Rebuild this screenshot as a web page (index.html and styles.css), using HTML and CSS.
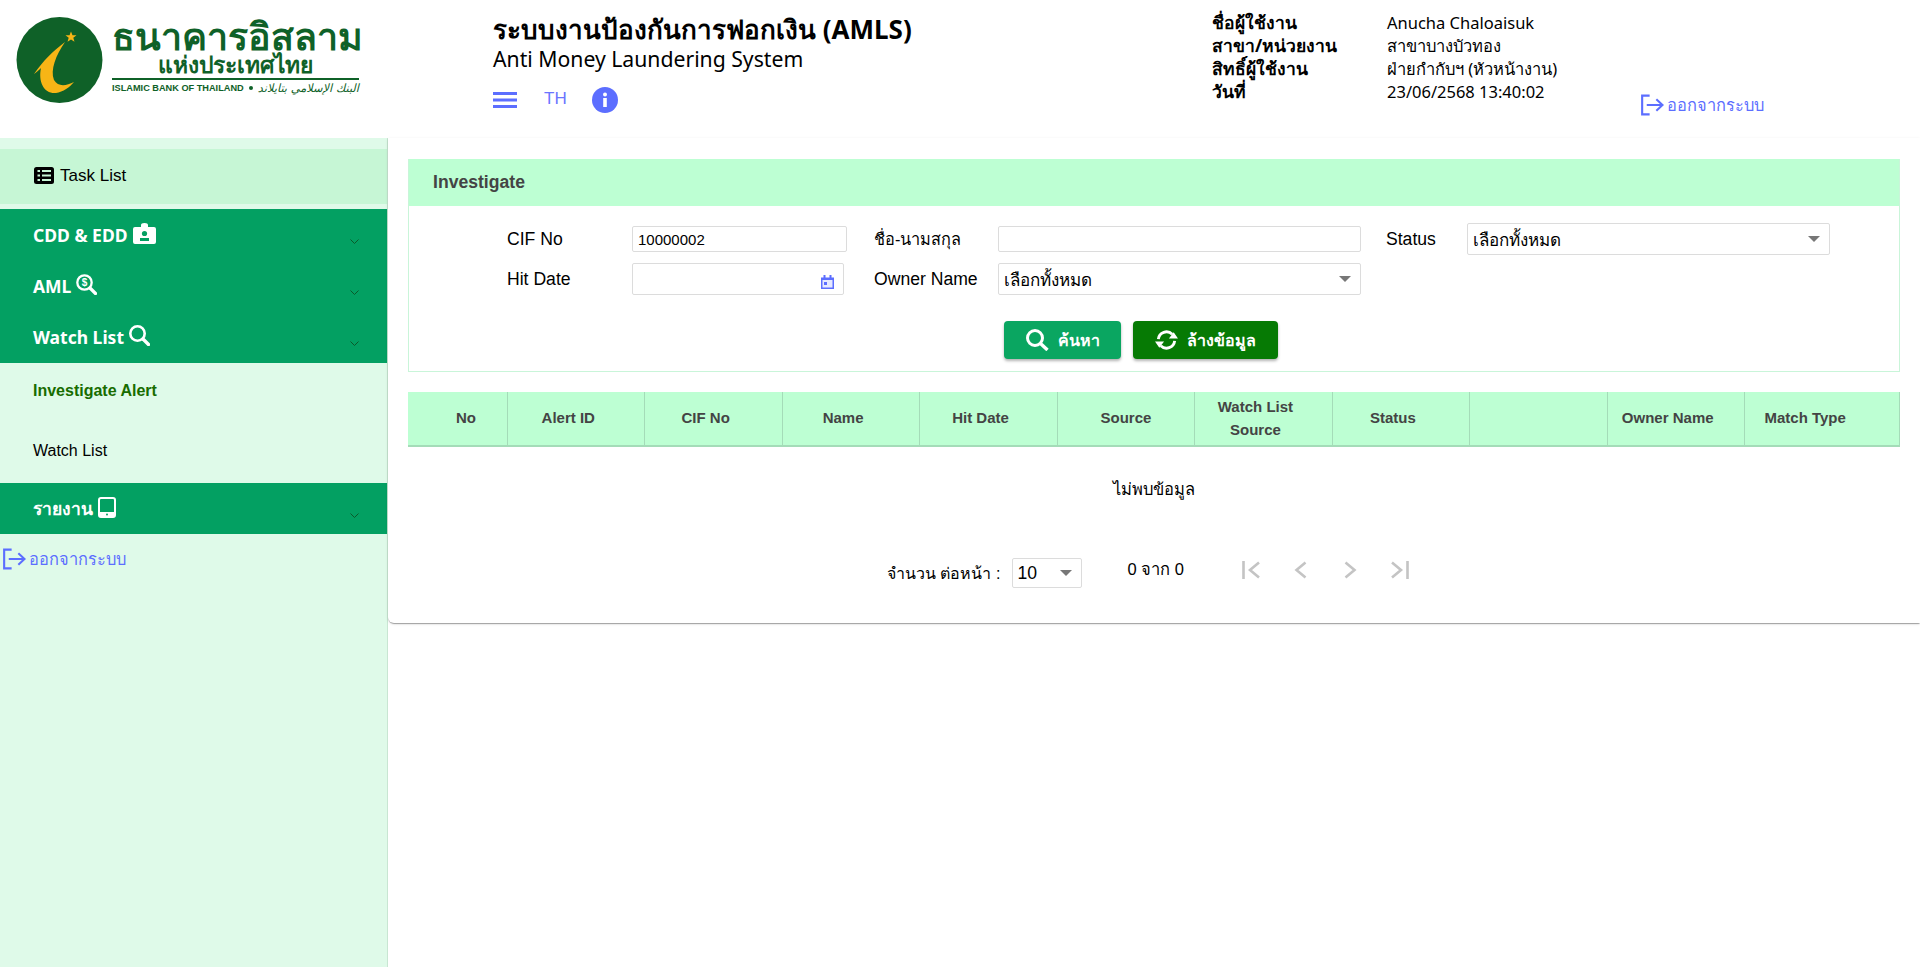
FILE: index.html
```html
<!DOCTYPE html>
<html lang="th">
<head>
<meta charset="utf-8">
<title>AMLS</title>
<link rel="stylesheet" href="styles.css">
</head>
<body>
<header class="header">
  <div class="brand">
    <svg class="brand-mark" viewBox="16 17 87 87"><circle cx="59.5" cy="60" r="43" fill="#0f6128"/><path d="M65 42C52 52 44 60 34 74C38 71 40 69 41 68C38 82 44 94 56 93C63 92 70 87 74 82C66 86 58 87 54 80C50 70 56 55 65 42Z" fill="#f7b516"/><polygon points="71,31.5 72.5,35.3 76.5,35.3 73.3,37.8 74.5,41.8 71,39.5 67.5,41.8 68.7,37.8 65.5,35.3 69.5,35.3" fill="#f7b516"/></svg>
    <div class="brand-text">
      <div class="brand-th">ธนาคารอิสลาม</div>
      <div class="brand-sub">แห่งประเทศไทย</div>
      <div class="brand-foot"><span class="brand-en">ISLAMIC BANK OF THAILAND</span><span class="brand-dot"></span><span class="brand-ar" dir="rtl">البنك الإسلامي بتايلاند</span></div>
    </div>
  </div>
  <div class="titles">
    <div class="title">ระบบงานป้องกันการฟอกเงิน (AMLS)</div>
    <div class="subtitle">Anti Money Laundering System</div>
    <div class="tools">
      <svg class="tool-menu" viewBox="0 0 24 16"><path d="M0 1.5H24M0 8H24M0 14.5H24" stroke="#5c6eff" stroke-width="3"/></svg>
      <span class="tool-lang">TH</span>
      <svg class="tool-info" viewBox="0 0 26 26"><circle cx="13" cy="13" r="13" fill="#5c6eff"/><rect x="11.2" y="11" width="3.6" height="9" fill="#fff"/><circle cx="13" cy="7.6" r="2" fill="#fff"/></svg>
    </div>
  </div>
  <dl class="user">
    <dt>ชื่อผู้ใช้งาน</dt><dd>Anucha Chaloaisuk</dd>
    <dt>สาขา/หน่วยงาน</dt><dd>สาขาบางบัวทอง</dd>
    <dt>สิทธิ์ผู้ใช้งาน</dt><dd>ฝ่ายกำกับฯ (หัวหน้างาน)</dd>
    <dt>วันที่</dt><dd>23/06/2568 13:40:02</dd>
  </dl>
  <a class="logout logout-top"><svg class="logout-icon" viewBox="0 0 24 22"><path d="M9 1.2H1.2V20.8H9M6 11H22M16 5L22.5 11L16 17" fill="none" stroke="#5c6eff" stroke-width="2.2"/></svg><span>ออกจากระบบ</span></a>
</header>
<div class="app">
  <nav class="sidebar">
    <div class="task"><svg class="task-icon" viewBox="0 0 20 17"><rect width="20" height="17" rx="2.5" fill="#000"/><path d="M3.5 4H6M8 4H17M3.5 8.5H6M8 8.5H17M3.5 13H6M8 13H17" stroke="#c6f6d5" stroke-width="2.2"/></svg><span>Task List</span></div>
    <div class="group">
      <div class="group-row"><span class="group-name">CDD &amp; EDD<svg class="g-icon icon-badge" viewBox="0 0 23 21"><path d="M2 4H8V2Q8 0 11.5 0Q15 0 15 2V4H21Q23 4 23 6V19Q23 21 21 21H2Q0 21 0 19V6Q0 4 2 4Z" fill="#fff"/><circle cx="11.5" cy="10.5" r="2.6" fill="#03a062"/><rect x="7" y="15" width="9" height="3" fill="#03a062"/></svg></span><svg class="chev" viewBox="0 0 9 5"><path d="M.5.5L4.5 4.5L8.500.5" fill="none" stroke="#0b5a2a"/></svg></div>
      <div class="group-row"><span class="group-name">AML<svg class="g-icon icon-search" viewBox="0 0 21 21"><circle cx="8.500" cy="8.500" r="7.200" fill="none" stroke="#fff" stroke-width="2.300"/><path d="M14 14L19.500 19.500" stroke="#fff" stroke-width="3.200" stroke-linecap="round"/><text x="8.500" y="12" class="dollar">$</text></svg></span><svg class="chev" viewBox="0 0 9 5"><path d="M.5.5L4.5 4.5L8.500.5" fill="none" stroke="#0b5a2a"/></svg></div>
      <div class="group-row"><span class="group-name">Watch List<svg class="g-icon icon-search" viewBox="0 0 21 21"><circle cx="8.500" cy="8.500" r="7.200" fill="none" stroke="#fff" stroke-width="2.600"/><path d="M14 14L19.500 19.500" stroke="#fff" stroke-width="3.400" stroke-linecap="round"/></svg></span><svg class="chev" viewBox="0 0 9 5"><path d="M.5.5L4.5 4.5L8.500.5" fill="none" stroke="#0b5a2a"/></svg></div>
    </div>
    <a class="sub sub-active">Investigate Alert</a>
    <a class="sub">Watch List</a>
    <div class="group">
      <div class="group-row"><span class="group-name">รายงาน<svg class="g-icon icon-tablet" viewBox="0 0 18 21"><rect x="1" y="1" width="16" height="19" rx="2" fill="none" stroke="#fff" stroke-width="2"/><rect x="1" y="15" width="16" height="5" fill="#fff"/><circle cx="9" cy="17.500" r="1" fill="#03a062"/></svg></span><svg class="chev" viewBox="0 0 9 5"><path d="M.5.5L4.5 4.5L8.500.5" fill="none" stroke="#0b5a2a"/></svg></div>
    </div>
    <a class="logout logout-side"><svg class="logout-icon" viewBox="0 0 24 22"><path d="M9 1.200H1.200V20.800H9M6 11H22M16 5L22.500 11L16 17" fill="none" stroke="#5c6eff" stroke-width="2.200"/></svg><span>ออกจากระบบ</span></a>
  </nav>
  <div class="content">
    <main class="sheet">
      <section class="panel">
        <h2 class="panel-head">Investigate</h2>
        <div class="form">
          <label class="f-label">CIF No</label>
          <input class="input" type="text" value="10000002">
          <label class="f-label f-label-th">ชื่อ-นามสกุล</label>
          <input class="input" type="text">
          <label class="f-label">Status</label>
          <div class="select"><span>เลือกทั้งหมด</span><i class="caret"></i></div>
          <label class="f-label">Hit Date</label>
          <div class="date"><svg class="cal" viewBox="0 0 13 14"><path d="M0 2.500H13V14H0ZM2.500 0H4.500V3H2.500ZM8.500 0H10.500V3H8.500Z" fill="#5c6eff"/><rect x="1.500" y="5" width="10" height="7.500" fill="#e6e9ff"/><rect x="3" y="7" width="3" height="3" fill="#5c6eff"/></svg></div>
          <label class="f-label">Owner Name</label>
          <div class="select"><span>เลือกทั้งหมด</span><i class="caret"></i></div>
        </div>
        <div class="actions">
          <button class="btn btn-search" type="button"><svg class="btn-icon" viewBox="0 0 23 22"><circle cx="9" cy="9" r="7.500" fill="none" stroke="#fff" stroke-width="3"/><path d="M14.500 14.500L21.500 21" stroke="#fff" stroke-width="3.400"/></svg><span>ค้นหา</span></button>
          <button class="btn btn-clear" type="button"><svg class="btn-icon" viewBox="0 0 24 22"><path d="M3.500 10A8.500 8.500 0 0 1 18 5M20.500 12A8.500 8.500 0 0 1 6 17" fill="none" stroke="#fff" stroke-width="3"/><path d="M14.500 9.500H24L19.500 3ZM0 12.500H9.500L4.500 19Z" fill="#fff"/></svg><span>ล้างข้อมูล</span></button>
        </div>
      </section>
      <table class="grid">
        <thead>
          <tr><th>No</th><th>Alert ID</th><th>CIF No</th><th>Name</th><th>Hit Date</th><th>Source</th><th>Watch List<br>Source</th><th>Status</th><th></th><th>Owner Name</th><th>Match Type</th></tr>
        </thead>
      </table>
      <p class="empty">ไม่พบข้อมูล</p>
      <div class="pager">
        <span class="pager-label">จำนวน ต่อหน้า :</span>
        <div class="select select-small"><span>10</span><i class="caret"></i></div>
        <span class="pager-range">0 จาก 0</span>
        <div class="pager-nav">
          <svg viewBox="0 0 19 18"><path d="M1.500 0V18M17 1.500L8 9L17 16.500" fill="none" stroke="#c4c4c4" stroke-width="2.600"/></svg>
          <svg viewBox="0 0 19 18"><path d="M13.500 1.500L4.500 9L13.500 16.500" fill="none" stroke="#c4c4c4" stroke-width="2.600"/></svg>
          <svg class="pager-next" viewBox="0 0 19 18"><path d="M5.500 1.500L14.500 9L5.500 16.500" fill="none" stroke="#c4c4c4" stroke-width="2.600"/></svg>
          <svg class="pager-last" viewBox="0 0 19 18"><path d="M17.500 0V18M2 1.500L11 9L2 16.500" fill="none" stroke="#c4c4c4" stroke-width="2.600"/></svg>
        </div>
      </div>
    </main>
  </div>
</div>
</body>
</html>
```
FILE: styles.css
```css
* { box-sizing: border-box; }
html, body { margin: 0; height: 967px; overflow: hidden; background: #fff; }
body { font-family: "Liberation Sans", "Noto Sans", sans-serif; color: #000; }

.header { display: flex; height: 138px; }
.brand { width: 493px; display: flex; padding: 16px 0 0 16px; gap: 9px; }
.brand-mark { width: 87px; height: 87px; flex: none; margin-top: 1px; }
.brand-text { width: 247px; display: flex; flex-direction: column; color: #0f6128; }
.brand-th { font-size: 37.500px; font-weight: 700; line-height: 43px; white-space: nowrap; text-align: center; }
.brand-sub { font-size: 22.800px; font-weight: 700; line-height: 13px; text-align: center; white-space: nowrap; border-bottom: 2px solid #0f6128; height: 21px; }
.brand-foot { display: flex; align-items: center; justify-content: space-between; margin-top: 1px; height: 14px; white-space: nowrap; }
.brand-en { font-size: 9.200px; font-weight: 700; }
.brand-dot { width: 4px; height: 4px; border-radius: 50%; background: #0f6128; }
.brand-ar { font-size: 11.400px; font-family: "DejaVu Sans", sans-serif; font-style: italic; }

.titles { width: 719px; padding-top: 14px; }
.title { font-family: "Noto Sans", "Liberation Sans", sans-serif; font-size: 26px; font-weight: 700; line-height: 30px; white-space: nowrap; }
.subtitle { font-family: "Noto Sans", sans-serif; font-size: 21.200px; line-height: 30px; white-space: nowrap; }
.tools { display: flex; align-items: center; height: 28px; margin-top: 12px; }
.tool-menu { width: 24px; height: 16px; }
.tool-lang { margin-left: 27px; width: 48px; color: #6b75ff; font-size: 17px; margin-top: -2px; }
.tool-info { width: 26px; height: 26px; margin-top: -1px; }

.user { width: 429px; margin: 0; padding-top: 11px; display: grid; grid-template-columns: 175px 1fr; grid-auto-rows: 23px; align-items: center; font-family: "Noto Sans", sans-serif; font-size: 16.500px; white-space: nowrap; }
.user dt { font-weight: 700; font-size: 17.500px; }
.user dd { margin: 0; }

.logout { display: flex; align-items: center; gap: 3px; color: #5c6eff; font-size: 16.400px; line-height: 22px; white-space: nowrap; font-family: "Noto Sans", "Liberation Sans", sans-serif; }
.logout-top { align-self: flex-start; margin-top: 94px; }
.logout-icon { width: 23px; height: 22px; flex: none; }

.app { display: flex; height: 829px; }
.sidebar { width: 388px; flex: none; background: #dffae9; border-right: 1px solid #c8e6d2; padding-top: 11px; }
.task { height: 55px; margin-bottom: 5px; background: #c6f6d5; padding: 0 0 2px 34px; display: flex; align-items: center; gap: 6px; font-size: 17px; }
.task-icon { width: 20px; height: 17px; }
.group { background: #03a062; }
.group-row { height: 51.300px; display: flex; align-items: center; justify-content: space-between; padding: 0 28px 0 33px; }
.group-name { display: flex; align-items: center; gap: 5px; color: #fff; font-family: "Noto Sans", "Liberation Sans", sans-serif; font-weight: 700; font-size: 17.500px; }
.g-icon { flex: none; margin-top: -3px; }
.icon-badge { width: 23px; height: 21px; }
.icon-search { width: 21px; height: 21px; }
.icon-tablet { width: 18px; height: 21px; }
.dollar { font-family: "Liberation Sans", sans-serif; font-size: 10px; font-weight: 700; fill: #fff; text-anchor: middle; }
.chev { width: 9px; height: 5px; margin-top: 13px; }
.sub { display: block; height: 60px; padding: 19px 0 0 33px; line-height: 18px; font-size: 16px; }
.sub-active { color: #186c00; font-weight: 700; }
.logout-side { height: 50px; padding-left: 3px; }

.content { flex: 1; background: #fff; }
.sheet { height: 485px; padding: 21px 20px 0; border-radius: 0 0 0 6px; box-shadow: 0 2px 1px -1px rgba(0,0,0,.2), 0 1px 1px 0 rgba(0,0,0,.14), 0 1px 3px 0 rgba(0,0,0,.12); }
.panel { height: 213px; border: 1px solid #c9f5d9; border-top: 0; }
.panel-head { margin: 0; height: 47px; background: #bdffd3; padding-left: 24px; font-size: 17.600px; line-height: 46px; color: #444; font-weight: 700; }
.form { display: grid; grid-template-columns: 125px 215px 27px 124px 363px 25px 81px 363px; grid-template-rows: 32px 32px; row-gap: 8px; align-items: center; padding: 17px 0 0 98px; }
.form .f-label:nth-of-type(1), .form .f-label:nth-of-type(4) { grid-column: 1; }
.form .f-label:nth-of-type(2), .form .f-label:nth-of-type(5) { grid-column: 4; }
.form .f-label:nth-of-type(3) { grid-column: 7; }
.f-label { font-size: 17.600px; white-space: nowrap; }
.f-label-th { font-size: 16.300px; font-weight: 400; }
.input { width: 100%; height: 26px; border: 1px solid #dcdcdc; border-radius: 2px; padding: 0 5px; font: 15px "Liberation Sans", sans-serif; color: #000; outline: 0; background: #fff; }
.date { width: 211.500px; height: 32px; border: 1px solid #dcdcdc; border-radius: 2px; display: flex; align-items: flex-end; justify-content: flex-end; padding: 0 9px 5px 0; }
.cal { width: 13px; height: 14px; }
.select { height: 32px; border: 1px solid #dcdcdc; border-radius: 2px; display: flex; align-items: center; justify-content: space-between; padding: 0 9px 0 5px; font-size: 17px; background: #fff; }
.caret { width: 0; height: 0; border: 6px solid transparent; border-top: 6px solid #777; border-bottom: 0; }
.actions { display: flex; gap: 12px; padding: 26px 0 0 595px; }
.btn { height: 38px; border: 0; border-radius: 4px; color: #fff; font: 700 16px "Noto Sans", "Liberation Sans", sans-serif; display: flex; align-items: center; justify-content: center; gap: 9px; box-shadow: 0 2px 3px rgba(0,0,0,.3); padding: 0; }
.btn-search { width: 117px; background: #0aa661; }
.btn-clear { width: 145px; background: #067a04; }
.btn-icon { width: 23px; height: 22px; }

.grid { width: 1492px; table-layout: fixed; border-collapse: collapse; margin-top: 20px; }
.grid th { height: 54px; background: #bdffd3; color: #444; font-size: 15px; line-height: 23px; font-weight: 700; width: 137.450px; padding: 0 16px 2px 0; text-align: center; border-right: 1px solid #a4dcb8; border-bottom: 2px solid #a4dcb8; }
.grid th:first-child { width: 99.500px; padding: 0 0 2px 17px; }
.grid th:nth-child(6) { padding: 0 0 2px; }
.grid th:last-child { width: 155.450px; padding-right: 34px; }
.empty { margin: 0; padding-top: 33px; height: 94px; text-align: center; font-size: 16.500px; line-height: 18px; }
.pager { display: flex; align-items: center; height: 30px; margin-top: 17px; padding-left: 479px; font-size: 16px; white-space: nowrap; }
.pager-label { width: 124.500px; }
.select-small { width: 70px; height: 30px; font-size: 17.600px; }
.pager-range { margin-left: 46px; width: 114px; padding-bottom: 9px; font-size: 16.500px; }
.pager-nav { display: flex; gap: 31px; padding-bottom: 7px; }
.pager-nav svg { width: 19px; height: 18px; }
.pager-nav .pager-next { margin-left: -1.500px; }
.pager-nav .pager-last { margin-left: -.500px; }
```
